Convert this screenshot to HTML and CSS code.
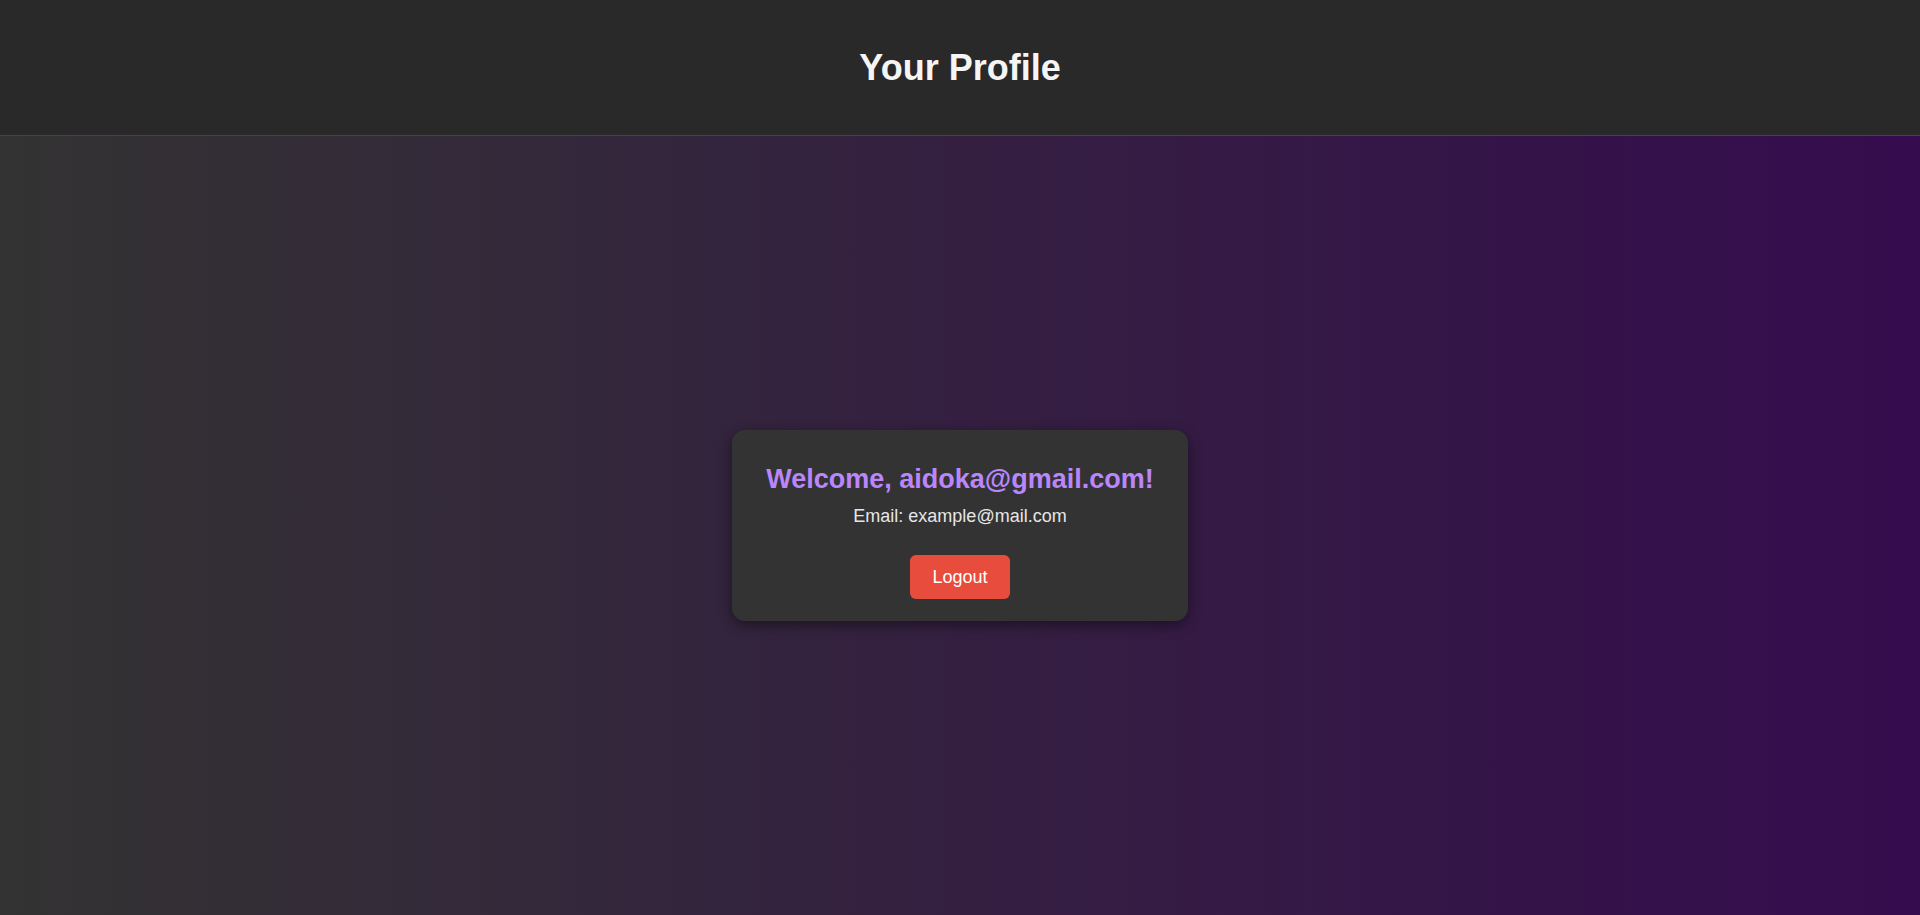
FILE: index.html
```html
<!DOCTYPE html>
<html lang="en">
<head>
<meta charset="utf-8">
<title>Your Profile</title>
<link rel="stylesheet" href="styles.css">
</head>
<body>
<header class="topbar">
  <h1 class="topbar-title">Your Profile</h1>
</header>
<main class="main">
  <section class="card">
    <h2 class="card-title">Welcome, aidoka@gmail.com!</h2>
    <p class="card-email">Email: example@mail.com</p>
    <button class="logout-btn" type="button">Logout</button>
  </section>
</main>
</body>
</html>
```
FILE: styles.css
```css
* { box-sizing: border-box; }
html, body { margin: 0; padding: 0; height: 100%; }
body {
  font-family: "Liberation Sans", Arial, sans-serif;
  display: flex;
  flex-direction: column;
  background: linear-gradient(to right, #333333, #350c4e);
  color: #e0e0e0;
}
.topbar {
  height: 136px;
  flex: none;
  background: #292929;
  border-bottom: 1px solid #444444;
  display: flex;
  align-items: center;
  justify-content: center;
}
.topbar-title {
  margin: 0;
  font-size: 36px;
  font-weight: bold;
  color: #f5f5f5;
}
.main {
  flex: 1;
  display: flex;
  align-items: center;
  justify-content: center;
}
.card {
  background: #333333;
  border-radius: 13px;
  padding: 34px 34px 22px;
  text-align: center;
  box-shadow: 0 4px 14px rgba(0, 0, 0, 0.45);
}
.card-title {
  margin: 0;
  font-size: 27px;
  line-height: 31px;
  font-weight: bold;
  color: #bb86fc;
}
.card-email {
  margin: 11px 0 0;
  font-size: 18px;
  line-height: 21px;
  color: #e6e6e6;
}
.logout-btn {
  margin-top: 28px;
  width: 100px;
  height: 44px;
  border: none;
  border-radius: 6px;
  background: #e74c3c;
  color: #ffffff;
  font-family: inherit;
  font-size: 18px;
  cursor: pointer;
}
```
